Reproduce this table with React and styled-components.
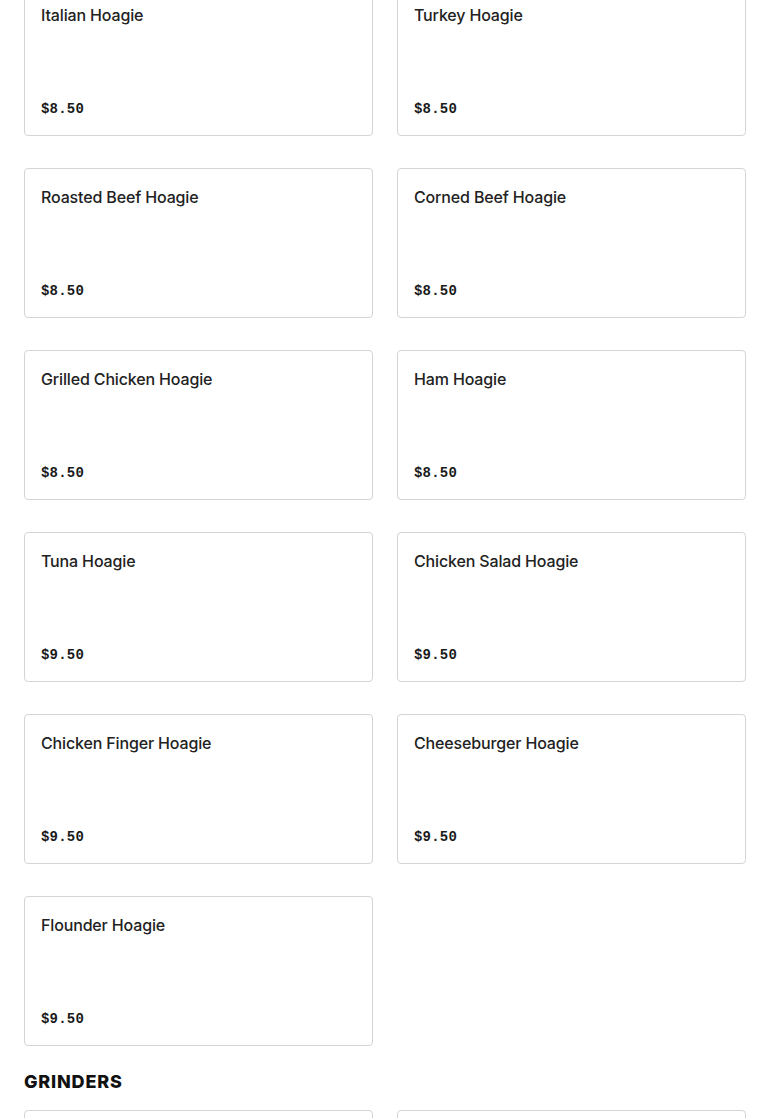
import React from 'react';
import styled, { createGlobalStyle } from 'styled-components';

const GlobalStyle = createGlobalStyle`
  body {
    margin: 0;
    background: #fff;
    font-family: Inter, "Noto Sans", sans-serif;
    color: #1f1f1f;
  }
`;

const Page = styled.div`
  padding: 0 24px;
  margin-top: -14px;
`;

const Grid = styled.div`
  display: grid;
  grid-template-columns: 1fr 1fr;
  column-gap: 24px;
  row-gap: 32px;
`;

const Card = styled.div`
  height: 150px;
  box-sizing: border-box;
  border: 1px solid #d4d4d4;
  border-radius: 4px;
  padding: 16px 16px 14px;
  display: flex;
  flex-direction: column;
  justify-content: space-between;
  background: #fff;
`;

const Title = styled.div`
  font-size: 16px;
  line-height: 24px;
  font-weight: 500;
  letter-spacing: -0.15px;
  color: #222;
`;

const Price = styled.div`
  font-family: "Liberation Mono", "DejaVu Sans Mono", monospace;
  font-size: 14px;
  line-height: 24px;
  font-weight: 700;
  letter-spacing: 0.2px;
  color: #1a1a1a;
`;

const Heading = styled.h2`
  margin: 24px 0 16px;
  font-size: 18px;
  line-height: 24px;
  font-weight: 800;
  letter-spacing: 0.8px;
  text-transform: uppercase;
  color: #111;
`;

const hoagies = [
  ['Italian Hoagie', '$8.50'],
  ['Turkey Hoagie', '$8.50'],
  ['Roasted Beef Hoagie', '$8.50'],
  ['Corned Beef Hoagie', '$8.50'],
  ['Grilled Chicken Hoagie', '$8.50'],
  ['Ham Hoagie', '$8.50'],
  ['Tuna Hoagie', '$9.50'],
  ['Chicken Salad Hoagie', '$9.50'],
  ['Chicken Finger Hoagie', '$9.50'],
  ['Cheeseburger Hoagie', '$9.50'],
  ['Flounder Hoagie', '$9.50'],
];

const grinders = [
  ['Italian Grinder', '$8.50'],
  ['Turkey Grinder', '$8.50'],
];

const MenuItem = ({ name, price }) => (
  <Card>
    <Title>{name}</Title>
    <Price>{price}</Price>
  </Card>
);

const App = () => {
  return (
    <Page>
      <GlobalStyle />
      <Grid>
        {hoagies.map(([name, price]) => (
          <MenuItem key={name} name={name} price={price} />
        ))}
      </Grid>
      <Heading>Grinders</Heading>
      <Grid>
        {grinders.map(([name, price]) => (
          <MenuItem key={name} name={name} price={price} />
        ))}
      </Grid>
    </Page>
  );
};

export default App;
